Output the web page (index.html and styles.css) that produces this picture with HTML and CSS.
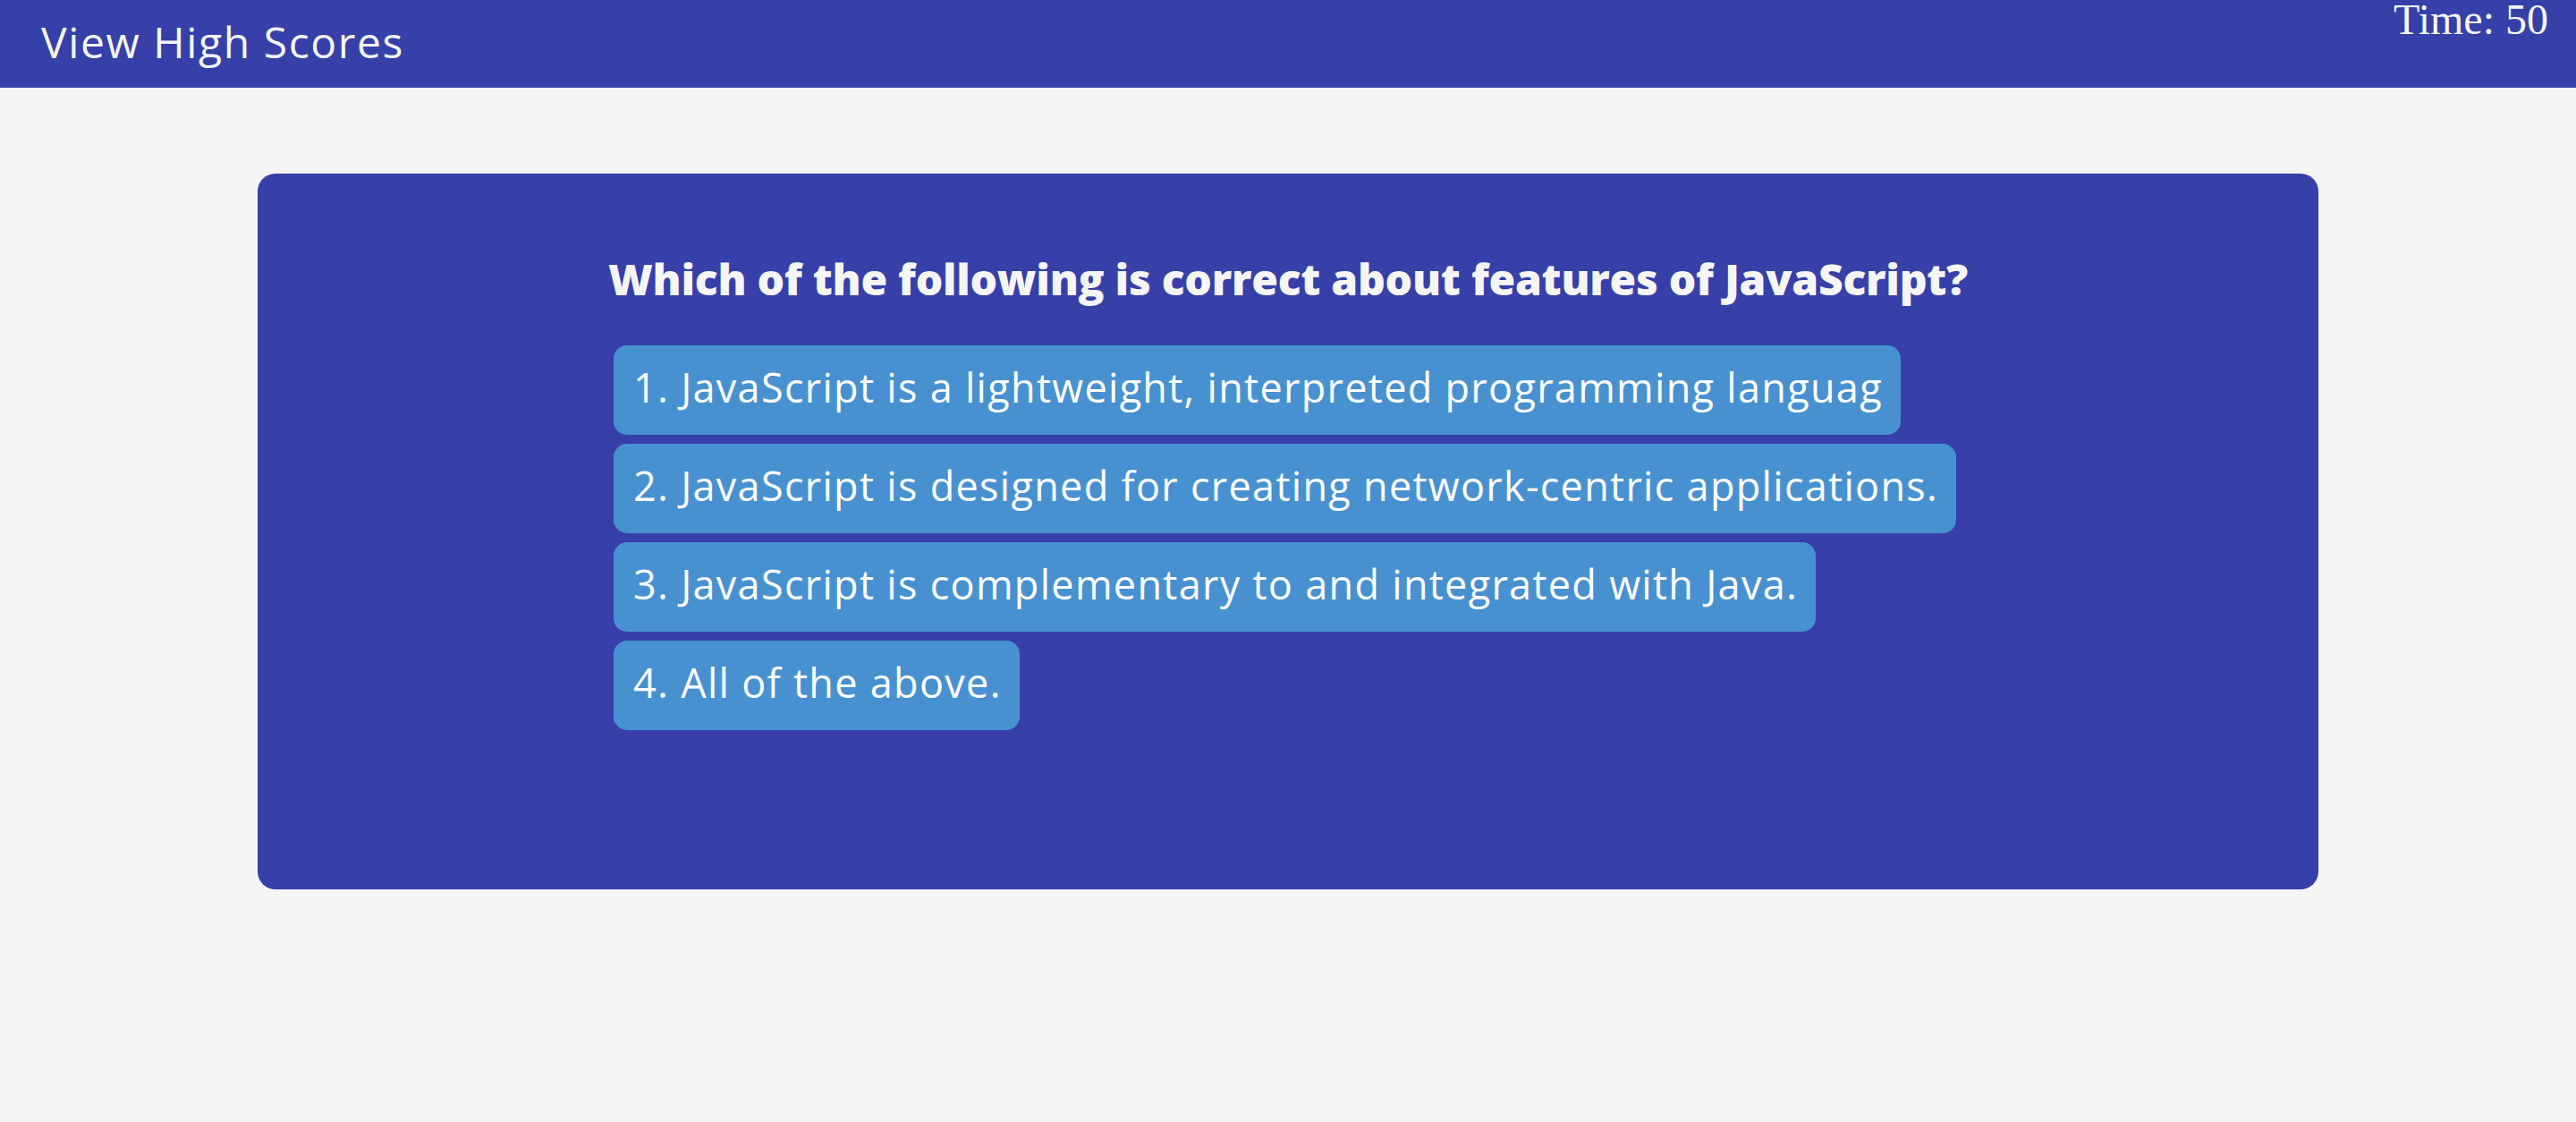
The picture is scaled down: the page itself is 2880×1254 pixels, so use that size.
FILE: index.html
```html
<!DOCTYPE html>
<html lang="en">
<head>
<meta charset="utf-8">
<title>Code Quiz</title>
<link rel="stylesheet" href="styles.css">
</head>
<body>
  <header class="topbar">
    <a class="scores-link" href="#">View High Scores</a>
    <div class="timer">Time: 50</div>
  </header>
  <main class="quiz-card">
    <div class="quiz-inner">
      <h2 class="question">Which of the following is correct about features of JavaScript?</h2>
      <div class="choices">
        <button class="choice">1. JavaScript is a lightweight, interpreted programming languag</button>
        <button class="choice">2. JavaScript is designed for creating network-centric applications.</button>
        <button class="choice">3. JavaScript is complementary to and integrated with Java.</button>
        <button class="choice">4. All of the above.</button>
      </div>
    </div>
  </main>
</body>
</html>
```
FILE: styles.css
```css
html, body {
  margin: 0;
  padding: 0;
}
body {
  background: #f5f5f5;
  font-family: "Open Sans", "Noto Sans", sans-serif;
  width: 2880px;
  height: 1254px;
  overflow: hidden;
}
.topbar {
  height: 98px;
  background: #3640a8;
  display: flex;
  justify-content: space-between;
  align-items: flex-start;
  padding: 0 31px 0 46px;
  box-sizing: border-box;
}
.scores-link {
  color: #f5f5f5;
  text-decoration: none;
  font-size: 48px;
  line-height: 66px;
  letter-spacing: 1.6px;
  padding-top: 14px;
}
.timer {
  font-family: "Liberation Serif", "Times New Roman", serif;
  color: #f5f5f5;
  font-size: 48px;
  line-height: 42px;
  padding-top: 1px;
}
.quiz-card {
  display: block;
  width: 2304px;
  height: 800px;
  margin: 96px auto 0;
  background: #3640a8;
  border-radius: 20px;
  padding-top: 85px;
  box-sizing: border-box;
}
.quiz-inner {
  width: 1508px;
  margin: 0 auto;
  display: flex;
  flex-direction: column;
  align-items: flex-start;
}
.question {
  align-self: center;
  margin: 0 0 42px;
  font-size: 48px;
  line-height: 65px;
  font-weight: 800;
  letter-spacing: -0.25px;
  color: #f5f5f5;
  white-space: nowrap;
  text-align: center;
}
.choices {
  display: flex;
  flex-direction: column;
  align-items: flex-start;
  gap: 10px;
}
.choice {
  font-family: "Open Sans", "Noto Sans", sans-serif;
  font-size: 45px;
  line-height: 60px;
  letter-spacing: 1.3px;
  height: 100px;
  box-sizing: border-box;
  padding: 17px 20px 23px 22px;
  border: none;
  border-radius: 15px;
  background: #4891d0;
  color: #ffffff;
  white-space: nowrap;
  cursor: pointer;
  text-align: left;
}
```
